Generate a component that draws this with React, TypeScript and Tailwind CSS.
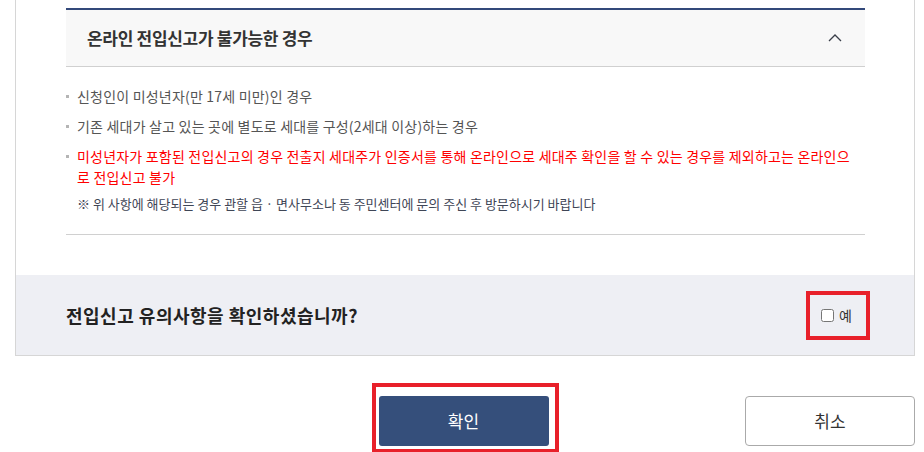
const FONT = "font-['Malgun_Gothic','Noto_Sans_CJK_KR',sans-serif]";

const ITEMS = [
  { text: '신청인이 미성년자(만 17세 미만)인 경우', red: false },
  { text: '기존 세대가 살고 있는 곳에 별도로 세대를 구성(2세대 이상)하는 경우', red: false },
  {
    text: '미성년자가 포함된 전입신고의 경우 전출지 세대주가 인증서를 통해 온라인으로 세대주 확인을 할 수 있는 경우를 제외하고는 온라인으로 전입신고 불가',
    red: true,
  },
];

export default function App() {
  return (
    <div className={`${FONT} bg-white w-[924px] h-[452px] overflow-hidden`}>
      {/* Panel */}
      <div className="ml-[15px] w-[900px] border-x border-b border-[#d6d6d6]">
        <div className="px-[50px] pt-[8px] pr-[49px]">
          {/* Accordion header */}
          <div className="border-t-2 border-[#33497a] bg-[#f8f8f8] border-b border-b-[#d0d0d0] h-[59px] flex items-center justify-between pl-[21px] pr-[23px]">
            <h2 className="text-[17px] font-bold text-[#333] tracking-[-0.3px]">온라인 전입신고가 불가능한 경우</h2>
            <svg width="14" height="9" viewBox="0 0 14 9" fill="none" className="mb-[1px]">
              <path d="M1 8L7 2L13 8" stroke="#3a3f4a" strokeWidth="1.3" />
            </svg>
          </div>

          {/* Content */}
          <div className="pt-[19px] pb-[20px] border-b border-[#d0d0d0]">
            <ul className="space-y-[9px] pr-[10px]">
              {ITEMS.map((item) => (
                <li key={item.text} className="flex text-[14px] leading-[21px] tracking-[0.2px]">
                  <span className="w-[3px] h-[3px] bg-[#b5b5b5] mt-[9px] mr-[8px] shrink-0" />
                  <span className={item.red ? 'text-[#ff0000] break-all' : 'text-[#555]'}>{item.text}</span>
                </li>
              ))}
            </ul>
            <p className="mt-[6px] pl-[11px] text-[13px] leading-[20px] text-[#3f4656]">
              ※ 위 사항에 해당되는 경우 관할 읍 · 면사무소나 동 주민센터에 문의 주신 후 방문하시기 바랍니다
            </p>
          </div>
        </div>

        {/* Confirm question */}
        <div className="mt-[40px] h-[80px] bg-[#eeeff4] flex items-center justify-between pl-[50px] pr-[44px]">
          <p className="text-[18px] font-bold text-[#222] tracking-[0.5px]">전입신고 유의사항을 확인하셨습니까?</p>
          <label className="border-[4px] border-[#e8202a] h-[49px] w-[64px] flex items-center justify-center gap-[5px] pr-[3px]">
            <input type="checkbox" className="w-[13px] h-[13px] m-0 accent-[#33497a]" />
            <span className="text-[14px] text-[#333]">예</span>
          </label>
        </div>
      </div>

      {/* Buttons */}
      <div className="ml-[15px] w-[900px] mt-[27px] grid grid-cols-[1fr_auto_1fr] items-start">
        <div />
        <div className="border-[4px] border-[#e8202a] pt-[9px] pl-[3px] pr-[6px] pb-[3px]">
          <button className="w-[170px] h-[50px] rounded-[3px] bg-[#354f7b] text-white text-[17px]">확인</button>
        </div>
        <div className="flex justify-end">
          <button className="mt-[13px] w-[170px] h-[50px] rounded-[4px] border border-[#aaa] bg-white text-[#333] text-[17px]">취소</button>
        </div>
      </div>
    </div>
  );
}
